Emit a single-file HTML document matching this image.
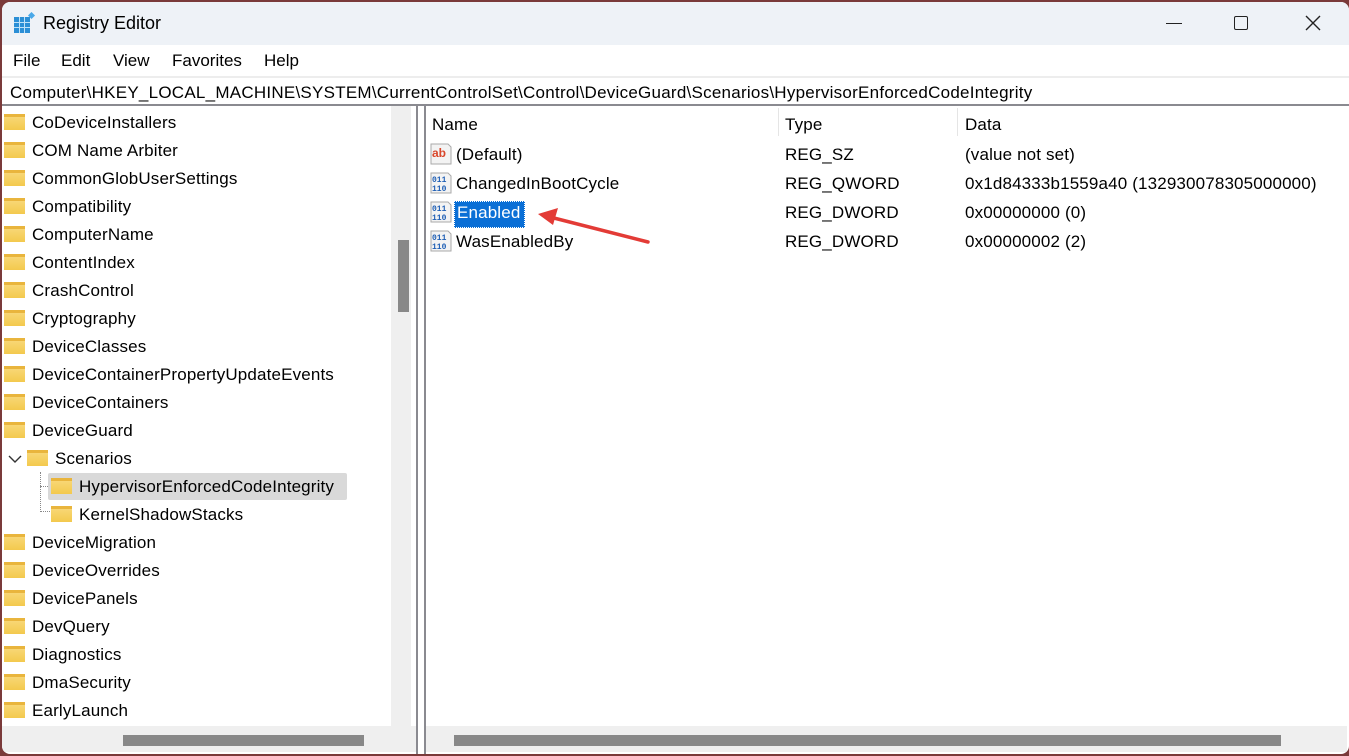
<!DOCTYPE html>
<html><head><style>
*{margin:0;padding:0;box-sizing:border-box}
body{width:1349px;height:756px;overflow:hidden;background:#7a3a3a;font-family:"Liberation Sans",sans-serif;font-size:17px;color:#000;position:relative}
.win{position:absolute;left:2px;top:2px;width:1347px;height:752px;background:#fff;border-radius:8px 8px 8px 8px;overflow:hidden}
.title{position:absolute;left:0;top:0;width:100%;height:43px;background:#eef2f7}
.title span{position:absolute;left:41px;top:11px;font-size:18px}
.menu{position:absolute;top:49px;font-size:17px}
.addr{position:absolute;left:0;top:74px;width:100%;height:30px;border-top:2px solid #ededed;border-bottom:2px solid #8a8a90;background:#fff}
.addr span{position:absolute;left:8px;top:5px;font-size:17px;letter-spacing:0.25px}
.lp{position:absolute;left:0;top:104px;width:416px;height:648px;border-right:2px solid #8a8a90}
.rp{position:absolute;left:422px;top:104px;width:925px;height:648px;border-left:2px solid #8a8a90}
.vs{position:absolute;left:389px;top:0;width:20px;height:620px;background:#efefef}
.vs div{position:absolute;left:7px;top:134px;width:11px;height:72px;background:#888}
.hs{position:absolute;left:0;top:620px;width:414px;height:26px;background:#efefef}
.hs div{position:absolute;left:121px;top:9px;width:241px;height:11px;background:#888}
.rhs{position:absolute;left:0;top:620px;width:921px;height:26px;background:#efefef}
.rhs div{position:absolute;left:28px;top:9px;width:827px;height:11px;background:#888}
.row{position:absolute;height:28px;line-height:30px;white-space:nowrap;letter-spacing:0.15px}
.f{display:inline-block;width:21px;height:16px;background:linear-gradient(#f8d775,#f3c94d);border-top:3px solid #e9b53d;vertical-align:-2px;margin-right:7px;position:relative}
.ic{position:absolute;width:22px;height:22px}
</style></head><body>
<div class="win">
<div class="title">
<svg style="position:absolute;left:11px;top:10px" width="24" height="22" viewBox="0 0 24 22"><rect x="1" y="5" width="16" height="16" fill="#2b8fd6"/><g stroke="#bfe2f8" stroke-width="1"><path d="M6.5 5v16M11.5 5v16M1 10.5h16M1 15.5h16"/></g><rect x="16" y="1" width="5" height="5" transform="rotate(45 18.5 3.5)" fill="#4aa8e8"/></svg>
<span>Registry Editor</span>
<div style="position:absolute;left:1164px;top:21px;width:16px;height:1px;background:#222"></div>
<div style="position:absolute;left:1232px;top:14px;width:14px;height:14px;border:1.5px solid #222;border-radius:2px"></div>
<svg style="position:absolute;left:1303px;top:13px" width="16" height="16"><path d="M1 1L15 15M15 1L1 15" stroke="#222" stroke-width="1.4"/></svg>
</div>
<div class="menu" style="left:11px">File</div>
<div class="menu" style="left:59px">Edit</div>
<div class="menu" style="left:111px">View</div>
<div class="menu" style="left:170px">Favorites</div>
<div class="menu" style="left:262px">Help</div>
<div class="addr"><span>Computer\HKEY_LOCAL_MACHINE\SYSTEM\CurrentControlSet\Control\DeviceGuard\Scenarios\HypervisorEnforcedCodeIntegrity</span></div>
<div class="lp">
<div class="row" style="left:2px;top:2px"><i class="f"></i>CoDeviceInstallers</div>
<div class="row" style="left:2px;top:30px"><i class="f"></i>COM Name Arbiter</div>
<div class="row" style="left:2px;top:58px"><i class="f"></i>CommonGlobUserSettings</div>
<div class="row" style="left:2px;top:86px"><i class="f"></i>Compatibility</div>
<div class="row" style="left:2px;top:114px"><i class="f"></i>ComputerName</div>
<div class="row" style="left:2px;top:142px"><i class="f"></i>ContentIndex</div>
<div class="row" style="left:2px;top:170px"><i class="f"></i>CrashControl</div>
<div class="row" style="left:2px;top:198px"><i class="f"></i>Cryptography</div>
<div class="row" style="left:2px;top:226px"><i class="f"></i>DeviceClasses</div>
<div class="row" style="left:2px;top:254px"><i class="f"></i>DeviceContainerPropertyUpdateEvents</div>
<div class="row" style="left:2px;top:282px"><i class="f"></i>DeviceContainers</div>
<div class="row" style="left:2px;top:310px"><i class="f"></i>DeviceGuard</div>
<svg style="position:absolute;left:6px;top:348px" width="14" height="10"><path d="M1 2l6 6 6-6" stroke="#333" stroke-width="1.4" fill="none"/></svg>
<div class="row" style="left:25px;top:338px"><i class="f"></i>Scenarios</div>
<div style="position:absolute;left:38px;top:366px;width:10px;height:40px;border-left:1px dotted #888;border-bottom:1px dotted #888"></div>
<div style="position:absolute;left:38px;top:380px;width:10px;border-top:1px dotted #888"></div>
<div style="position:absolute;left:46px;top:367px;width:299px;height:27px;background:#d9d9d9;border-radius:2px"></div>
<div class="row" style="left:49px;top:366px"><i class="f"></i>HypervisorEnforcedCodeIntegrity</div>
<div class="row" style="left:49px;top:394px"><i class="f"></i>KernelShadowStacks</div>
<div class="row" style="left:2px;top:422px"><i class="f"></i>DeviceMigration</div>
<div class="row" style="left:2px;top:450px"><i class="f"></i>DeviceOverrides</div>
<div class="row" style="left:2px;top:478px"><i class="f"></i>DevicePanels</div>
<div class="row" style="left:2px;top:506px"><i class="f"></i>DevQuery</div>
<div class="row" style="left:2px;top:534px"><i class="f"></i>Diagnostics</div>
<div class="row" style="left:2px;top:562px"><i class="f"></i>DmaSecurity</div>
<div class="row" style="left:2px;top:590px"><i class="f"></i>EarlyLaunch</div>
<div class="vs"><div></div></div>
<div class="hs"><div></div></div>
</div>
<div class="rp">
<div style="position:absolute;left:352px;top:2px;height:28px;border-left:1px solid #e5e5e5"></div>
<div style="position:absolute;left:531px;top:2px;height:28px;border-left:1px solid #e5e5e5"></div>
<div class="row" style="left:6px;top:4px">Name</div>
<div class="row" style="left:359px;top:4px">Type</div>
<div class="row" style="left:539px;top:4px">Data</div>
<svg class="ic" style="left:4px;top:37px" viewBox="0 0 22 22"><path d="M1 1h17l3 3v17H1z" fill="#f3f3f3" stroke="#aaa"/><text x="2" y="14" font-size="12" font-weight="bold" fill="#d9472b" font-family="Liberation Sans">ab</text></svg>
<div class="row" style="left:30px;top:34px">(Default)</div>
<div class="row" style="left:359px;top:34px">REG_SZ</div>
<div class="row" style="left:539px;top:34px">(value not set)</div>
<svg class="ic" style="left:4px;top:66px" viewBox="0 0 22 22"><path d="M1 1h17l3 3v17H1z" fill="#f3f3f3" stroke="#aaa"/><text x="2" y="10" font-size="8" font-weight="bold" fill="#1f5fb5" font-family="Liberation Mono">011</text><text x="2" y="19" font-size="8" font-weight="bold" fill="#1f5fb5" font-family="Liberation Mono">110</text></svg>
<div class="row" style="left:30px;top:63px">ChangedInBootCycle</div>
<div class="row" style="left:359px;top:63px">REG_QWORD</div>
<div class="row" style="left:539px;top:63px">0x1d84333b1559a40 (132930078305000000)</div>
<svg class="ic" style="left:4px;top:95px" viewBox="0 0 22 22"><path d="M1 1h17l3 3v17H1z" fill="#f3f3f3" stroke="#aaa"/><text x="2" y="10" font-size="8" font-weight="bold" fill="#1f5fb5" font-family="Liberation Mono">011</text><text x="2" y="19" font-size="8" font-weight="bold" fill="#1f5fb5" font-family="Liberation Mono">110</text></svg>
<div style="position:absolute;left:28px;top:95px;width:71px;height:27px;background:#0a6fd6;border:1px dotted #fff"></div>
<div class="row" style="left:31px;top:92px;color:#fff">Enabled</div>
<div class="row" style="left:359px;top:92px">REG_DWORD</div>
<div class="row" style="left:539px;top:92px">0x00000000 (0)</div>
<svg class="ic" style="left:4px;top:124px" viewBox="0 0 22 22"><path d="M1 1h17l3 3v17H1z" fill="#f3f3f3" stroke="#aaa"/><text x="2" y="10" font-size="8" font-weight="bold" fill="#1f5fb5" font-family="Liberation Mono">011</text><text x="2" y="19" font-size="8" font-weight="bold" fill="#1f5fb5" font-family="Liberation Mono">110</text></svg>
<div class="row" style="left:30px;top:121px">WasEnabledBy</div>
<div class="row" style="left:359px;top:121px">REG_DWORD</div>
<div class="row" style="left:539px;top:121px">0x00000002 (2)</div>
<svg style="position:absolute;left:106px;top:98px" width="120" height="45"><path d="M116 38L14 12" stroke="#e33b36" stroke-width="3.5" stroke-linecap="round"/><path d="M6 10L26 4L21 21Z" fill="#e33b36"/></svg>
<div class="rhs"><div></div></div>
</div>
</div>
</body></html>
